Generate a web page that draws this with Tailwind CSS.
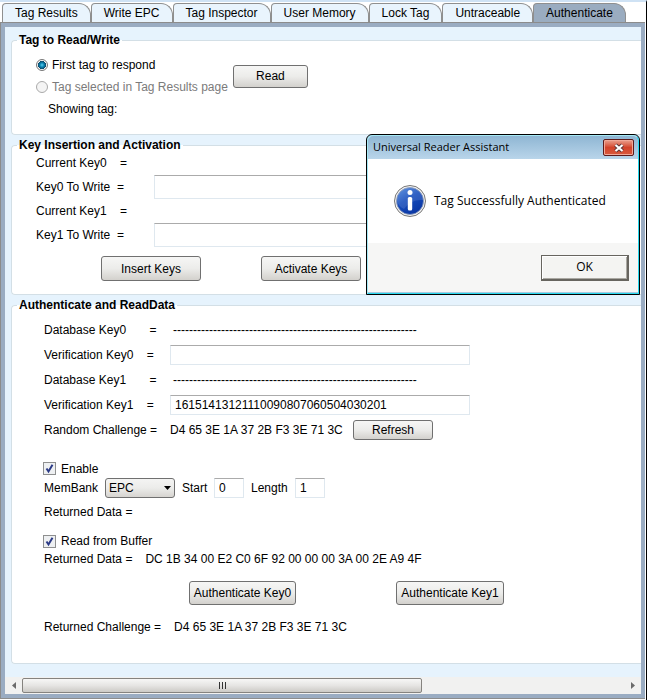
<!DOCTYPE html>
<html lang="en">
<head>
<meta charset="utf-8">
<meta name="viewport" content="width=device-width, initial-scale=1">
<title>Universal Reader Assistant</title>
<script src="https://cdn.jsdelivr.net/npm/@tailwindcss/browser@4"></script>
</head>
<body class="bg-white font-['Liberation_Sans',Arial,sans-serif] text-xs leading-4 text-black">
<div class="relative mr-px min-h-screen border-t-2 border-r border-t-[#cfe2f4] border-r-black pt-px pr-px">
  <div role="tablist" class="flex pl-0.5">
    <button role="tab" class="h-[19px] rounded-tl-sm rounded-tr-xl border border-b-0 border-[#8f8f8f] bg-[#e9f4fd] px-3">Tag Results</button>
    <button role="tab" class="h-[19px] rounded-tl-sm rounded-tr-xl border border-b-0 border-[#8f8f8f] bg-[#e9f4fd] px-3">Write EPC</button>
    <button role="tab" class="h-[19px] rounded-tl-sm rounded-tr-xl border border-b-0 border-[#8f8f8f] bg-[#e9f4fd] px-3">Tag Inspector</button>
    <button role="tab" class="h-[19px] rounded-tl-sm rounded-tr-xl border border-b-0 border-[#8f8f8f] bg-[#e9f4fd] px-3">User Memory</button>
    <button role="tab" class="h-[19px] rounded-tl-sm rounded-tr-xl border border-b-0 border-[#8f8f8f] bg-[#e9f4fd] px-3">Lock Tag</button>
    <button role="tab" class="h-[19px] rounded-tl-sm rounded-tr-xl border border-b-0 border-[#8f8f8f] bg-[#e9f4fd] px-3">Untraceable</button>
    <button role="tab" aria-selected="true" class="h-[19px] rounded-tl-sm rounded-tr-xl border border-b-0 border-[#8f8f8f] bg-[#9aacc0] px-3">Authenticate</button>
  </div>

  <div class="border border-r-0 border-[#8c8c8c] bg-[#9aacc2] p-1">
    <main class="bg-[#e6f3fd] pt-[7px]">
      <form class="flex flex-col gap-1 pl-1.5">
        <fieldset class="rounded-l border border-r-0 border-[#d3dfe6] bg-white pb-3.5 pl-6">
          <legend class="-ml-[19px] px-0.5 text-xs leading-3 font-bold">Tag to Read/Write</legend>
          <div class="flex items-center gap-[5px] pt-2">
            <div>
              <label class="flex h-[22px] items-center gap-1"><input type="radio" name="tag" checked class="size-3 appearance-none rounded-full border border-[#777] bg-[radial-gradient(circle,#5fd0ee_0,#0b86b4_2px,#0c4566_4px,#f4f4f4_4px)]">First tag to respond</label>
              <label class="flex h-[22px] items-center gap-1 text-[#7b7b7b]"><input type="radio" name="tag" disabled class="size-3 appearance-none rounded-full border border-[#aaa] bg-[#f4f4f4]">Tag selected in Tag Results page</label>
            </div>
            <button type="button" class="h-[23px] w-[75px] rounded-[3px] border border-[#707070] bg-linear-to-b from-[#f6f6f5] via-[#ececea] to-[#d3d1cd]">Read</button>
          </div>
          <p class="flex h-[22px] items-center pl-3">Showing tag:</p>
        </fieldset>

        <fieldset class="rounded-l border border-r-0 border-[#d3dfe6] bg-white pb-[13px] pl-6">
          <legend class="-ml-[19px] px-0.5 text-xs leading-3 font-bold">Key Insertion and Activation</legend>
          <p class="flex h-6 items-center whitespace-pre">Current Key0    =</p>
          <div class="flex h-6 items-center">
            <label for="key0" class="w-[118px] whitespace-pre">Key0 To Write  =</label>
            <input id="key0" class="h-6 w-[300px] border border-[#dfe8ef] border-t-[#ababab] bg-white px-1">
          </div>
          <p class="flex h-6 items-center whitespace-pre">Current Key1    =</p>
          <div class="flex h-6 items-center">
            <label for="key1" class="w-[118px] whitespace-pre">Key1 To Write  =</label>
            <input id="key1" class="h-6 w-[300px] border border-[#dfe8ef] border-t-[#ababab] bg-white px-1">
          </div>
          <div class="flex gap-[60px] pt-[9px] pl-[65px]">
            <button type="button" class="h-[25px] w-[100px] rounded-[3px] border border-[#707070] bg-linear-to-b from-[#f6f6f5] via-[#ececea] to-[#d3d1cd]">Insert Keys</button>
            <button type="button" class="h-[25px] w-[100px] rounded-[3px] border border-[#707070] bg-linear-to-b from-[#f6f6f5] via-[#ececea] to-[#d3d1cd]">Activate Keys</button>
          </div>
        </fieldset>

        <fieldset class="rounded-l border border-r-0 border-[#d3dfe6] bg-white pb-[27px] pl-8">
          <legend class="-ml-[27px] px-0.5 text-xs leading-3 font-bold">Authenticate and ReadData</legend>
          <div class="mt-1.5 flex h-[25px] items-center">
            <span class="w-[126px] whitespace-pre">Database Key0       =</span>
            <span class="pl-[3px]">-------------------------------------------------------------</span>
          </div>
          <div class="flex h-[25px] items-center">
            <label for="ver0" class="w-[126px] whitespace-pre">Verification Key0    =</label>
            <input id="ver0" class="h-5 w-[300px] border border-[#dfe8ef] border-t-[#ababab] bg-white px-1">
          </div>
          <div class="flex h-[25px] items-center">
            <span class="w-[126px] whitespace-pre">Database Key1       =</span>
            <span class="pl-[3px]">-------------------------------------------------------------</span>
          </div>
          <div class="flex h-[25px] items-center">
            <label for="ver1" class="w-[126px] whitespace-pre">Verification Key1    =</label>
            <input id="ver1" value="16151413121110090807060504030201" class="h-5 w-[300px] border border-[#dfe8ef] border-t-[#ababab] bg-white px-1">
          </div>
          <div class="flex h-[25px] items-center">
            <span class="w-[126px]">Random Challenge =</span>
            <span class="w-[183px]">D4 65 3E 1A 37 2B F3 3E 71 3C</span>
            <button type="button" class="h-5 w-20 rounded-[3px] border border-[#707070] bg-linear-to-b from-[#f6f6f5] via-[#ececea] to-[#d3d1cd] leading-4">Refresh</button>
          </div>

          <label class="mt-[17px] flex h-[19px] items-center gap-[5px]">
            <span class="-ml-px grid size-[13px]"><input type="checkbox" checked class="col-start-1 row-start-1 size-[13px] appearance-none border border-[#8e8f8f] bg-[#eef0f2]"><svg viewBox="0 0 13 13" class="pointer-events-none col-start-1 row-start-1 size-[13px]" fill="none" stroke="#2b3a86" stroke-width="2"><path d="M3.5 6.5 L5.5 9.5 L9.5 2.8"/></svg></span>Enable</label>
          <div class="flex h-5 items-center">
            <label for="bank" class="w-[61px]">MemBank</label>
            <div class="grid items-center">
              <select id="bank" class="col-start-1 row-start-1 h-5 w-[70px] appearance-none rounded-[3px] border border-[#707070] bg-linear-to-b from-[#f4f4f3] via-[#ececea] to-[#d6d4d0] pl-[3px]"><option>EPC</option><option>TID</option><option>User</option></select>
              <svg viewBox="0 0 7 4" class="pointer-events-none col-start-1 row-start-1 mr-1 h-1 w-[7px] justify-self-end"><path d="M0 0h7L3.5 4z"/></svg>
            </div>
            <label for="start" class="ml-[7px] w-8">Start</label>
            <input id="start" value="0" class="h-5 w-[30px] border border-[#dfe8ef] border-t-[#ababab] bg-white px-1">
            <label for="len" class="ml-[7px] w-11">Length</label>
            <input id="len" value="1" class="h-5 w-[30px] border border-[#dfe8ef] border-t-[#ababab] bg-white px-1">
          </div>
          <p class="mt-1 flex h-5 items-center">Returned Data =</p>
          <label class="mt-2.5 flex h-[18px] items-center gap-[5px]">
            <span class="-ml-px grid size-[13px]"><input type="checkbox" checked class="col-start-1 row-start-1 size-[13px] appearance-none border border-[#8e8f8f] bg-[#eef0f2]"><svg viewBox="0 0 13 13" class="pointer-events-none col-start-1 row-start-1 size-[13px]" fill="none" stroke="#2b3a86" stroke-width="2"><path d="M3.5 6.5 L5.5 9.5 L9.5 2.8"/></svg></span>Read from Buffer</label>
          <div class="flex h-[18px] items-center gap-[13px]"><span>Returned Data =</span><span>DC 1B 34 00 E2 C0 6F 92 00 00 00 3A 00 2E A9 4F</span></div>
          <div class="flex gap-[100px] pt-[13px] pl-[145px]">
            <button type="button" class="h-6 w-[107px] rounded-[3px] border border-[#707070] bg-linear-to-b from-[#f6f6f5] via-[#ececea] to-[#d3d1cd]">Authenticate Key0</button>
            <button type="button" class="h-6 w-[108px] rounded-[3px] border border-[#707070] bg-linear-to-b from-[#f6f6f5] via-[#ececea] to-[#d3d1cd]">Authenticate Key1</button>
          </div>
          <div class="mt-[13px] flex h-[18px] items-center gap-[13px]"><span>Returned Challenge =</span><span>D4 65 3E 1A 37 2B F3 3E 71 3C</span></div>
        </fieldset>
      </form>

      <div class="mt-[13px] flex h-[17px] items-center bg-[#f1f1f0]">
        <button type="button" aria-label="Scroll left" class="flex h-4 w-[17px] items-center justify-center"><svg viewBox="0 0 4 7" class="h-[7px] w-1" fill="#6b6b6b"><path d="M4 0v7L0 3.5z"/></svg></button>
        <div class="flex h-[15px] w-[400px] items-center justify-center gap-0.5 rounded-[2px] border border-[#85837f] bg-linear-to-b from-[#f7f7f6] via-[#e6e5e3] to-[#cccac6]">
          <span class="h-[7px] w-px bg-[#333]"></span><span class="h-[7px] w-px bg-[#333]"></span><span class="h-[7px] w-px bg-[#333]"></span>
        </div>
        <button type="button" aria-label="Scroll right" class="ml-auto flex h-4 w-[17px] items-center justify-center"><svg viewBox="0 0 4 7" class="h-[7px] w-1" fill="#6b6b6b"><path d="M0 0v7L4 3.5z"/></svg></button>
      </div>
    </main>
  </div>

  <div role="dialog" aria-labelledby="dlg-title" class="absolute top-[132px] left-[366px] w-[274px] rounded-t-md border border-black bg-[#9fc3dd] font-['Open_Sans','Noto_Sans',sans-serif] text-xs">
    <div class="rounded-t-md border border-[#a5e9f5] border-r-[#27d8ee] border-b-[#27d8ee]">
      <div class="flex h-[23px] items-center justify-between rounded-t-md bg-linear-to-b from-[#8fb6d3] to-[#b9d5ea] pr-1 pl-[5px]">
        <h2 id="dlg-title" class="text-[11px]">Universal Reader Assistant</h2>
        <button type="button" aria-label="Close" class="flex h-[17px] w-[31px] items-center justify-center rounded-[2px] border border-[#5c1a1a] bg-linear-to-b from-[#e9a08f] via-[#d2432b] to-[#d9593c] shadow-[inset_0_0_0_1px_#f0a898]">
          <svg viewBox="0 0 12 10" class="h-2.5 w-3" fill="none"><path d="M2.5 2l7 6M9.5 2l-7 6" stroke="#5b3538" stroke-width="4"/><path d="M2.5 2l7 6M9.5 2l-7 6" stroke="#fff" stroke-width="2.2"/></svg>
        </button>
      </div>
      <div class="flex h-[84px] items-center gap-[7px] bg-white pl-[25px]">
        <svg viewBox="0 0 34 34" class="size-[34px]">
          <defs><linearGradient id="ball" x1="0" y1="0" x2="0.6" y2="1"><stop offset="0" stop-color="#4c86dc"/><stop offset="0.5" stop-color="#164cbc"/><stop offset="1" stop-color="#0b37a4"/></linearGradient></defs>
          <circle cx="17" cy="17" r="15.5" fill="#f2f2f2" stroke="#777" stroke-width="1"/>
          <circle cx="17" cy="17" r="13.5" fill="url(#ball)" stroke="#8b9bb8" stroke-width="0.8"/>
          <path d="M4 17a13 13 0 0 1 26-1q-12-1-19 9-5-2-7-8z" fill="#fff" opacity="0.12"/>
          <circle cx="17" cy="8.5" r="2.5" fill="#fff"/><rect x="14.8" y="13" width="4.4" height="13.5" rx="1.5" fill="#fff"/>
        </svg>
        <p>Tag Successfully Authenticated</p>
      </div>
      <div class="flex h-[50px] items-center justify-end border-b border-[#a9c9df] bg-[#f6f6f5] pr-[9px]">
        <button type="button" class="h-[26px] w-[88px] border border-r-2 border-b-2 border-[#67655f] bg-[#f4f4f2] shadow-[inset_1px_1px_0_#fff,inset_-1px_-1px_0_#aaa8a2]">OK</button>
      </div>
    </div>
  </div>
</div>
</body>
</html>
